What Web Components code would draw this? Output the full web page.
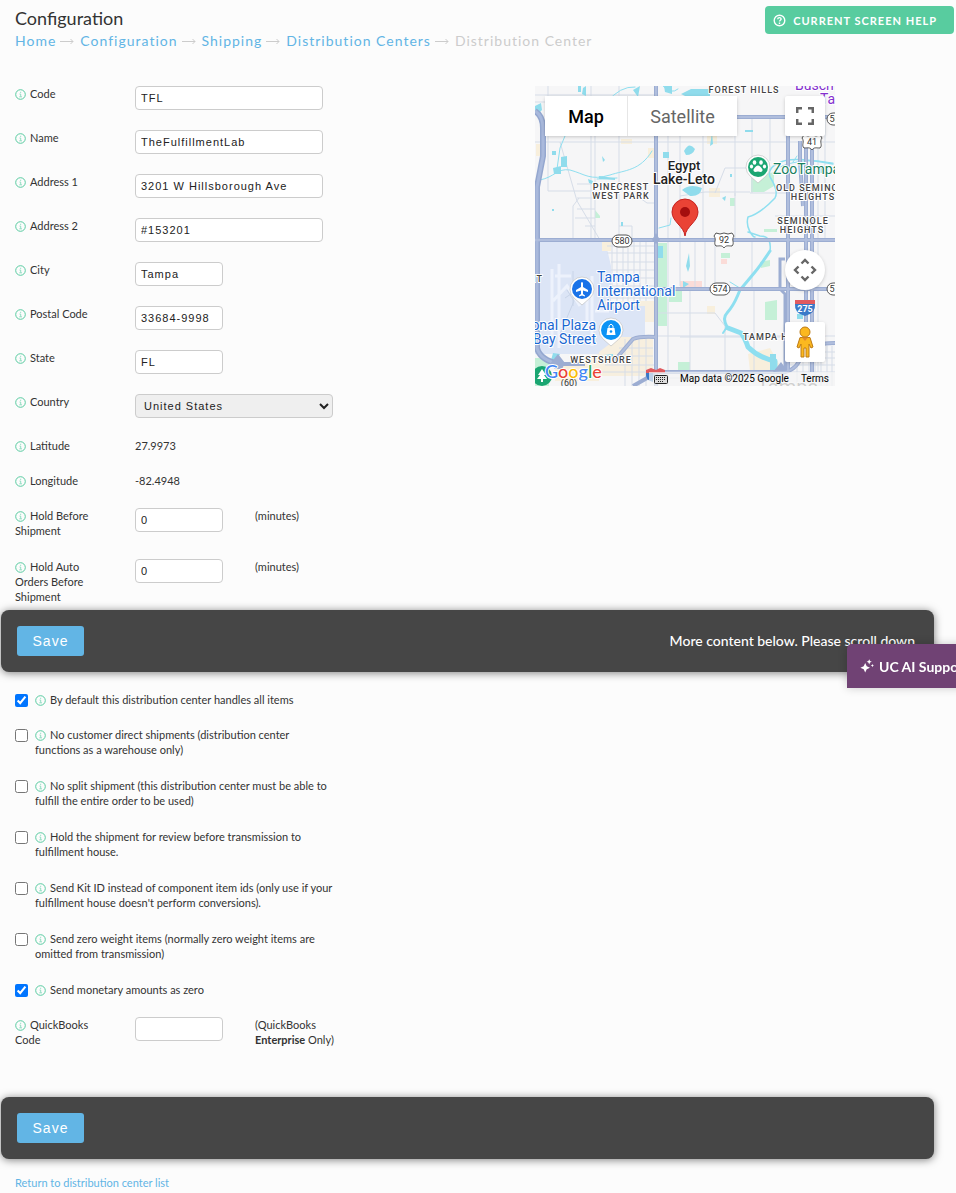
<!DOCTYPE html>
<html lang="en">
<head>
<meta charset="utf-8">
<title>Configuration - Distribution Center</title>
<style>
body { margin: 0; background: #fcfcfc; color: #333; font: 11px/15px Lato, "Open Sans", sans-serif; }
</style>
</head>
<body>
<config-page></config-page>
<script>
class Base extends HTMLElement {
  connectedCallback() {
    if (this.shadowRoot) return;
    this.attachShadow({ mode: 'open' }).innerHTML = this.render();
  }
  attr(name) { return this.getAttribute(name) || ''; }
}

customElements.define('info-icon', class extends Base {
  render() {
    return `<style>
      :host { display: inline-block; width: 11px; height: 11px; margin-right: 4px; vertical-align: -2px; }
      svg { display: block; }
    </style>
    <svg width="11" height="11" viewBox="0 0 11 11" fill="none" stroke="#58cba0" aria-hidden="true">
      <circle cx="5.5" cy="5.5" r="4.8"/><path d="M4.5 5H5.7V7.6M4.3 7.8H7M5 3.3H6.2" stroke-width=".8" stroke="#7bd6b5"/>
    </svg>`;
  }
});

customElements.define('form-field', class extends Base {
  render() {
    const size = this.attr('size');
    const value = this.attr('value');
    let control = `<input id="c" type="text" class="${size}" value="${value}">`;
    if (size === 'select') control = `<select id="c"><option>${value}</option></select>`;
    if (size === 'text') control = `<output id="c">${value}</output>`;
    return `<style>
      :host { display: grid; grid-template-columns: 120px minmax(0, auto) 1fr; align-items: start; }
      :host([tall]) { min-height: 31px; }
      label { width: 90px; }
      input, select { box-sizing: border-box; height: 24px; border: 1px solid #ccc; border-radius: 4px;
        color: #222; font: 11px "Liberation Sans", Arial, sans-serif; letter-spacing: 1px; margin: 0; padding: 0 5px; background: #fff; }
      .wide { width: 188px; }
      .small { width: 88px; }
      select { width: 198px; background: #efefef; padding: 0 4px; }
      .note { width: 90px; margin-left: 32px; }
    </style>
    <label for="c"><info-icon></info-icon>${this.attr('label')}</label>${control}<span class="note"><slot></slot></span>`;
  }
});

customElements.define('check-row', class extends Base {
  render() {
    return `<style>
      :host { display: flex; align-items: flex-start; gap: 7px; }
      :host([tall]) { min-height: 31px; }
      input { width: 13px; height: 13px; margin: 2px 0 0; flex: none; }
      label { width: 300px; }
    </style>
    <input type="checkbox" id="c" ${this.hasAttribute('checked') ? 'checked' : ''}>
    <label for="c"><info-icon></info-icon><slot></slot></label>`;
  }
});

customElements.define('action-bar', class extends Base {
  render() {
    return `<style>
      :host { display: flex; align-items: center; justify-content: space-between; box-sizing: border-box;
        height: 62px; padding: 0 19px 0 16px; margin: 0 22px 0 1px; border-radius: 8px; background: #464646;
        box-shadow: 0 1px 8px rgba(0,0,0,.5); color: #fff; font-size: 14px; line-height: 20px; font-weight: 500; }
      button { width: 67px; height: 30px; padding: 0; border: 0; border-radius: 3px; background: #62b5e5; color: #fff;
        font: 14px "Liberation Sans", Arial, sans-serif; letter-spacing: 1px; }
    </style>
    <button type="submit">Save</button><span><slot></slot></span>`;
  }
});

customElements.define('page-header', class extends Base {
  render() {
    return `<style>
      :host { display: flex; justify-content: space-between; align-items: flex-start; padding: 6px 2px 0 15px; }
      h1 { margin: 0; font-size: 18px; line-height: 24px; font-weight: 400; }
      nav { display: flex; font-size: 14px; line-height: 22px; letter-spacing: 1px; color: #ccc; }
      a { color: #62b5e5; text-decoration: none; }
      nav svg { margin: 7px 6px 0 4px; }
      button { display: flex; align-items: center; gap: 7px; height: 28px; padding: 0 17px 0 8px; border: 0; border-radius: 4px;
        background: #58cc9f; color: #fff; font: 700 11px Lato, sans-serif; letter-spacing: 1px; }
    </style>
    <div><h1>Configuration</h1><nav aria-label="Breadcrumb">${
      ['Home', 'Configuration', 'Shipping', 'Distribution Centers'].map(t =>
        `<a href="#">${t}</a><svg width="14" height="9" viewBox="0 0 14 9" fill="none" stroke="#ccc"><path d="M0 4.5H13M10.5 2L13 4.5L10.5 7"/></svg>`).join('')
    }<span>Distribution Center</span></nav></div>
    <button type="button"><svg width="13" height="13" viewBox="0 0 13 13" fill="none" stroke="#fff" stroke-width="1.4"><circle cx="6.5" cy="6.5" r="5.3"/><path d="M4.7 5.2C4.8 3 8.2 3.2 8.1 5.1C8 6.3 6.5 6.2 6.5 7.6M6.5 8.6V9.9"/></svg>CURRENT SCREEN HELP</button>`;
  }
});

customElements.define('ai-tab', class extends Base {
  render() {
    return `<style>
      :host { position: fixed; top: 54%; right: -28px; z-index: 5; }
      button { display: flex; align-items: center; gap: 5px; width: 137px; height: 44px; padding: 0 0 0 13px; border: 0;
        border-radius: 5px 0 0 0; background: #704274; color: #fff; font: 700 14px Lato, sans-serif; white-space: nowrap;
        box-shadow: 0 0 10px rgba(0,0,0,.2); }
    </style>
    <button type="button"><svg width="14" height="14" viewBox="0 0 14 14" fill="#fff"><path d="M5.2 4L6.7 7.3L10 8.8L6.7 10.3L5.2 13.6L3.7 10.3L.4 8.8L3.7 7.3ZM9.2 .2L10 2L11.8 2.8L10 3.6L9.2 5.4L8.4 3.6L6.6 2.8L8.4 2ZM12.4 5L12.9 6.1L14 6.6L12.9 7.1L12.4 8.2L11.9 7.1L10.8 6.6L11.9 6.1Z"/></svg>UC AI Support</button>`;
  }
});

customElements.define('map-view', class extends Base {
  render() {
    const shield = (x, y, t, w = 20) => `<rect x="${x - w / 2}" y="${y - 6}" width="${w}" height="12" rx="6" fill="#fff" stroke="#555"/><text x="${x}" y="${y + 3}" class="n">${t}</text>`;
    const us = (x, y, t) => `<path d="M${x-8} ${y-7}L${x-4} ${y-6}L${x} ${y-7}L${x+4} ${y-6}L${x+8} ${y-7}L${x+10} ${y-4}C${x+7} ${y} ${x+11} ${y+3} ${x+8} ${y+6}C${x+4} ${y+6} ${x+2} ${y+5} ${x} ${y+8}C${x-2} ${y+5} ${x-4} ${y+6} ${x-8} ${y+6}C${x-11} ${y+3} ${x-7} ${y} ${x-10} ${y-4}Z" fill="#fff" stroke="#555"/><text x="${x}" y="${y + 3}" class="n">${t}</text>`;
    const drop = (x, y, c) => `<path d="M${x} ${y+16}L${x-8} ${y+9}A12 12 0 1 1 ${x+8} ${y+9}Z" fill="#fff" stroke="#bbb" stroke-width=".6"/><circle cx="${x}" cy="${y}" r="10" fill="${c}"/>`;
    return `<style>
      :host { display: block; position: relative; width: 300px; height: 300px; overflow: hidden; }
      svg { display: block; }
      text { font-family: Roboto, sans-serif; paint-order: stroke; stroke: #fff; stroke-width: 2px; stroke-linejoin: round; }
      .n { font-size: 9px; fill: #333; text-anchor: middle; stroke: none; }
      .a { font-size: 9px; font-weight: 500; fill: #444; letter-spacing: 1px; text-anchor: middle; }
      .c { font-size: 13px; font-weight: 500; fill: #222; text-anchor: middle; }
      .p { font-size: 14px; fill: #1967d2; }
      .types { position: absolute; left: 10px; top: 10px; display: flex; box-shadow: 0 1px 4px -1px rgba(0,0,0,.3); border-radius: 2px; background: #fff; }
      button { border: 0; background: #fff; padding: 0; font: 18px Roboto, sans-serif; color: #666; display: grid; place-items: center; }
      .types button { width: 110px; height: 40px; border-left: 1px solid #e6e6e6; }
      .types button:first-child { width: 82px; color: #000; font-weight: 500; border: 0; }
      .tool { position: absolute; right: 10px; width: 40px; height: 40px; border-radius: 2px; box-shadow: 0 1px 4px -1px rgba(0,0,0,.3); }
      .full { top: 10px; } .pan { top: 164px; border-radius: 50%; } .man { top: 236px; }
      .credit { position: absolute; right: 0; bottom: 0; display: flex; gap: 12px; height: 14px; padding: 0 6px 0 5px;
        background: rgba(245,245,245,.7); font: 10px/14px Roboto, sans-serif; color: #000; white-space: nowrap; align-items: center; }
      .credit a { color: #000; text-decoration: none; }
    </style>
    <svg width="300" height="300" viewBox="0 0 300 300" role="img" aria-label="Map of Tampa">
      <rect width="300" height="300" fill="#f6f6f7"/>
      <path d="M0 154H70L76 180V215H110V251H85L70 268H0Z" fill="#dce5f6"/>
      <path d="M64 266L84 251H118V290H60ZM67 215H121V236H110V220H76Z" fill="#f7efdf"/>
      <path d="M67 155H76V165H67ZM1 58H5V70H1ZM113 62H120V72H113ZM86 53H97V58H86ZM172 49H182V58H172ZM174 102H185V111H174ZM172 220H180V228H172ZM213 268L235 262L248 285H215ZM20 280L64 268V295H20Z" fill="#f8efdc"/>
      <path d="M122 157H132V240H122ZM216 92L239 86V100L229 106H216ZM60 124L65 130V132H60ZM195 112H200V120H195ZM229 143H242V146H229ZM186 167H195V172H186ZM230 216L242 214V234H230ZM0 272H14V300H0ZM143 276H155V286H143ZM225 176L235 174V180L226 182ZM134 205H147V216H134Z" fill="#c5f0d7"/>
      <path d="M145 195H167V201H145ZM186 173H192V178H186Z" fill="#fbdcd8"/>
      <g fill="none" stroke="#edf2fc" stroke-width="3"><path d="M17 183V262M24 178V262M20 190H36M18 215L32 200L45 220M52 195V245M57 190V260M60 225H74M15 240H30"/></g>
      <path d="M25 248L39 215L32 204M30 212L45 202M38 185V220" fill="none" stroke="#c8d4e8"/>
      <g fill="none" stroke="#d6dde8" stroke-width="1">
        <path d="M0 9H120M0 16H10M13 0V105M56 0V155M60 50V154M84 0V154M133 30V300M217 30V80M0 56H120M122 56H300M13 105H60M25 56L42 115L65 154M38 154V120L44 112M84 140H97V154M42 98H56M42 112H60M42 123H60M40 132H60M50 140H60M145 110L170 106H215M180 107L190 82H218M200 107V154M217 80V107M105 112L112 117H121M145 32V200M170 155V203M217 155V203M155 204V286M219 204V286M122 227H180L190 240V286M121 250H300M145 251H245M240 130H300M215 107H300M283 40V286M290 33V154M200 40V110M235 33V75M160 155V203M180 155V200M168 33V155"/>
        <path d="M77 155V204M82 160V215M88 160V215M93 155V215M99 155V215M105 155V215M111 155V215M72 160H120M72 167H120M76 176H120M76 184H120M76 192H120M76 200H120M84 207H120M76 212H120M90 253V300M97 253V300M104 253V300M111 253V300M84 262H118M75 270H118M70 279H120M66 286H120"/>
        <path d="M247 286H300M249 279H300M251 272H300M257 266H300M262 258V300M268 262V300M274 260V300M280 260V300M286 260V300M292 260V300M297 260V300M130 292H250"/>
      </g>
      <g fill="none" stroke="#8edff0" stroke-linecap="round" stroke-linejoin="round">
        <path stroke-width="1" d="M5 94C20 91 22 82 35 84C50 88 55 95 75 89C90 84 105 85 117 65M30 50L25 62L22 83M62 93L82 92M72 16Q85 0 100 1M124 142L135 139L136 132M240 83Q265 70 298 77M195 196L208 204M258 76L262 70M128 0Q136 9 143 3"/>
        <path stroke-width="1.5" d="M298 78C280 75 255 70 244 77Q232 82 235 91Q244 105 240 112Q225 128 213 131C210 142 218 151 220 151M213 146L225 150Q237 150 235 165"/>
        <path stroke-width="3" d="M235 165Q225 180 220 186L205 204C201 213 200 218 192 227Q187 232 192 241"/><path stroke-width="5" d="M193 242L206 247Q210 252 213 261Q224 272 240 275V284"/>
        <path stroke-width="2" d="M192 241L188 247"/>
      </g>
      <path d="M0 20L6 17L7 24L3 28L0 27ZM48 2L51 0V10L47 8ZM55 13H62V18H55ZM71 13L78 14L80 17H70ZM26 71L32 70V81H26ZM17 65H21V69H17ZM18 82L26 80V88H19ZM67 70L70 74L68 76ZM53 93L58 95L57 98L54 97ZM64 90L80 92V94L64 93ZM129 0H137V8L130 6ZM146 8L156 3H175V16H162ZM149 65Q154 55 160 63Q158 69 151 69ZM147 104Q155 97 167 102Q165 111 155 110ZM128 66H134V72H128ZM187 112L191 110L190 115ZM195 88H197V91H195ZM175 60L177 47L178 58ZM86 136H88V140H86ZM123 160H128V172H123ZM154 167L151 180L153 186L155 180ZM148 195L154 198L148 202ZM285 80H292V87H285ZM235 268H241V285H235ZM17 123H19V125H17ZM69 269L78 268V271L70 270ZM210 44H218V46H210ZM262 228H268V233H262ZM18 267L25 268L20 278H15ZM43 0H46V6H43ZM98 4L105 0L103 11Z" fill="#90dcec"/>
      <g fill="none" stroke="#94a7cf" stroke-width="6"><path d="M0 25Q8 30 8 42V70L2 101V127L2 262Q5 274 24 278"/></g>
      <g fill="none" stroke="#9cadd2" stroke-width="4"><path d="M0 154H300M121 0V300M122 286H250Q263 283 267 268Q274 257 300 257M24 278H50M80 274L98 253Q105 250 121 251M98 300L121 287M198 31H300M121 203H300M253 32V286M271 30V250M277 33V286M265 55V75L268 120"/><path stroke-width="3" d="M250 173H245V203L250 208V286"/></g>
      <g fill="none" stroke="#a9b9dc" stroke-width="3"><path d="M0 25Q8 30 8 42V70L2 101V262Q5 274 24 278"/></g>
      <g fill="none" stroke="#b0bedd" stroke-width="2"><path d="M0 154H300M121 0V300M122 286H250Q263 283 267 268Q274 257 300 257M80 274L98 253Q105 250 121 251M198 31H300M121 203H300M253 32V286M271 30V250M277 33V286M265 55V75L268 120"/></g>
      <path d="M117 154L121 147L125 154L121 158ZM15 278L23 268L30 277L27 283H20ZM238 286L246 276L252 284Z" fill="#9cadd2"/>

      ${shield(87, 155, '580')}${shield(185, 203, '574')}${shield(302, 203, '574')}${shield(302, 33, '580')}${shield(34, 297, '(60)', 0)}
      ${us(277, 56, '41')}${us(189, 154, '92')}
      <path d="M260 214H280V219H260Z" fill="#e05a5f"/><path d="M260 218H280Q281 227 270 230Q259 227 260 218Z" fill="#3979c8"/><text x="270" y="226" class="n" style="fill:#fff;font-weight:700">275</text>
      <path d="M111 284L116 282L121 284L125 282L130 284V287H111Z" fill="#e05a5f"/><path d="M111 287H118V296Q110 294 111 287Z" fill="#3979c8"/>

      <text class="a" x="209" y="7">FOREST HILLS</text>
      <text class="a" x="86" y="104">PINECREST</text><text class="a" x="86" y="113">WEST PARK</text>
      <text class="a" x="241" y="105" style="text-anchor:start">OLD SEMINOLE</text><text class="a" x="278" y="114">HEIGHTS</text>
      <text class="a" x="268" y="138">SEMINOLE</text><text class="a" x="267" y="147">HEIGHTS</text>
      <text class="a" x="66" y="277">WESTSHORE</text><text class="a" x="208" y="254" style="text-anchor:start">TAMPA HEIGHTS</text>
      <text class="a" x="8" y="196" style="text-anchor:end">NT</text>
      <text class="c" x="149" y="84">Egypt</text><text class="c" x="149" y="98" style="font-size:14px">Lake-Leto</text>
      <text class="p" x="62" y="196">Tampa</text><text class="p" x="62" y="210">International</text><text class="p" x="62" y="224">Airport</text>
      <text class="p" x="61" y="244" text-anchor="end">onal Plaza</text><text class="p" x="61" y="258" text-anchor="end">Bay Street</text>
      <text class="p" x="238" y="88" style="fill:#188060">ZooTampa</text>
      <text class="p" x="260" y="4" style="fill:#8430ce">Busch</text><text class="p" x="285" y="18" style="fill:#8430ce">Tampa</text>
      <text x="222" y="308" style="font-size:20px;fill:#777">Tampa</text>

      ${drop(47, 203, '#1a73e8')}<path d="M46 197Q47 195 48 197V201L53 204V206L48 204.500V208L50 209.500V210.500L47 209.500L44 210.500V209.500L46 208V204.500L41 206V204L46 201Z" fill="#fff"/>
      ${drop(76, 244, '#0c93f5')}<path d="M72.500 242H79.500L80.500 249H71.500Z" fill="#fff"/><path d="M74 242V240Q76 236.500 78 240V242" fill="none" stroke="#fff"/><circle cx="76" cy="245.500" r="1.300" fill="#0c93f5"/>
      ${drop(223, 81, '#1ba672')}<g fill="#fff"><ellipse cx="219.500" cy="76.500" rx="1.800" ry="2.300"/><ellipse cx="226" cy="76.500" rx="1.800" ry="2.300"/><ellipse cx="216.500" cy="80.500" rx="1.600" ry="2"/><ellipse cx="229.500" cy="80.500" rx="1.600" ry="2"/><path d="M223 79.500Q225 79.500 227.500 83.500Q228 87 223 85.500Q218 87 218.500 83.500Q221 79.500 223 79.500Z"/></g>
      <circle cx="7" cy="290" r="10" fill="#1ba672"/><path d="M7 283L11 289H9L12 293H8V296H6V293H2L5 289H3Z" fill="#fff"/>
      <path d="M150 150C149 140 137 136 137 126A13 13 0 0 1 163 126C163 136 151 140 150 150Z" fill="#ea4335" stroke="#c5221f"/><circle cx="150" cy="126" r="5" fill="#a50e0e"/>
      <text x="10" y="292" style="font:500 18px Lato,sans-serif;stroke-width:2px"><tspan fill="#4285f4">G</tspan><tspan fill="#ea4335">o</tspan><tspan fill="#fbbc04">o</tspan><tspan fill="#4285f4">g</tspan><tspan fill="#34a853">l</tspan><tspan fill="#ea4335">e</tspan></text>
    </svg>
    <div class="types"><button type="button">Map</button><button type="button">Satellite</button></div>
    <button class="tool full" type="button" aria-label="Full screen"><svg width="18" height="18" fill="none" stroke="#666" stroke-width="2.500"><path d="M1.200 6V1.200H6M12 1.200H16.800V6M16.800 12V16.800H12M6 16.800H1.200V12"/></svg></button>
    <button class="tool pan" type="button" aria-label="Pan"><svg width="24" height="24" fill="none" stroke="#666" stroke-width="2.400"><path d="M8.500 5.500L12 2L15.500 5.500M8.500 18.500L12 22L15.500 18.500M5.500 8.500L2 12L5.500 15.500M18.500 8.500L22 12L18.500 15.500"/></svg></button>
    <button class="tool man" type="button" aria-label="Street view"><svg width="18" height="32" fill="#fbb81f" stroke="#bd7a15"><path d="M4 11.500H14L17 21L15 22L13 18V31H10V22H8V31H5V18L3 22L1 21Z"/><circle cx="9" cy="6" r="5"/><path d="M6 11.500H12L9 15Z" fill="#e5892b" stroke="none"/></svg></button>
    <div class="credit"><svg width="14" height="9"><rect x=".5" y=".5" width="13" height="8" rx="1" fill="#ddd" stroke="#222"/><path d="M2 2.500H12M2 4.500H12M4 6.500H10" stroke="#222" stroke-dasharray="1 1"/></svg><span>Map data ©2025 Google</span><a href="#">Terms</a></div>`;
  }
});

customElements.define('config-page', class extends Base {
  render() {
    const f = (label, size, value, extra = '', note = '') => `<form-field label="${label}" size="${size}" value="${value}" ${extra}>${note}</form-field>`;
    return `<style>
      :host { display: block; }
      .top { display: flex; margin: 34px 15px 6px; }
      .fields { flex: 0 0 520px; }
      .stack { display: grid; gap: 20px; }
      .checks { margin: 20px 15px 49px; }
      .back { display: block; width: fit-content; margin: 16px 15px 0; color: #62b5e5; text-decoration: none; }
    </style>
    <page-header></page-header>
    <div class="top"><div class="fields stack">
      ${f('Code', 'wide', 'TFL')}${f('Name', 'wide', 'TheFulfillmentLab')}${f('Address 1', 'wide', '3201 W Hillsborough Ave')}${f('Address 2', 'wide', '#153201')}
      ${f('City', 'small', 'Tampa')}${f('Postal Code', 'small', '33684-9998')}${f('State', 'small', 'FL')}${f('Country', 'select', 'United States')}
      ${f('Latitude', 'text', '27.9973')}${f('Longitude', 'text', '-82.4948')}
      ${f('Hold Before Shipment', 'small', '0', 'tall', '(minutes)')}${f('Hold Auto Orders Before Shipment', 'small', '0', 'tall', '(minutes)')}
    </div><map-view></map-view></div>
    <action-bar>More content below. Please scroll down</action-bar>
    <div class="checks stack">
      <check-row checked>By default this distribution center handles all items</check-row>
      <check-row tall>No customer direct shipments (distribution center functions as a warehouse only)</check-row>
      <check-row tall>No split shipment (this distribution center must be able to fulfill the entire order to be used)</check-row>
      <check-row tall>Hold the shipment for review before transmission to fulfillment house.</check-row>
      <check-row tall>Send Kit ID instead of component item ids (only use if your fulfillment house doesn't perform conversions).</check-row>
      <check-row tall>Send zero weight items (normally zero weight items are omitted from transmission)</check-row>
      <check-row checked>Send monetary amounts as zero</check-row>
      ${f('QuickBooks Code', 'small', '', 'tall', '(QuickBooks <b>Enterprise</b> Only)')}
    </div>
    <action-bar></action-bar>
    <a class="back" href="#">Return to distribution center list</a>
    <ai-tab></ai-tab>`;
  }
});
</script>
</body>
</html>
